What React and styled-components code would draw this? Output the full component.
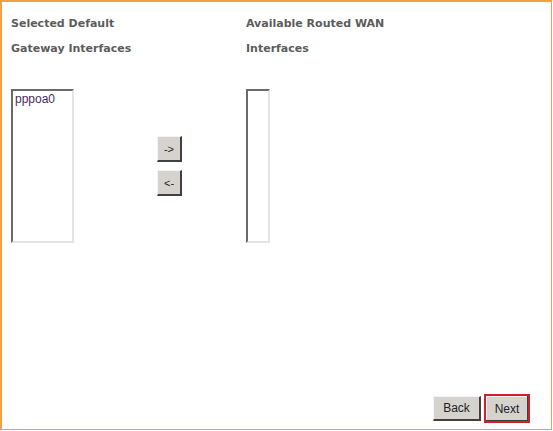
import React from "react";
import styled, { createGlobalStyle } from "styled-components";

const Global = createGlobalStyle`
  html, body { margin: 0; padding: 0; background: #ffffff; }
  #root { width: 553px; height: 431px; }
`;

const Frame = styled.div`
  box-sizing: border-box;
  width: 552px;
  height: 430px;
  border: 2px solid #f4a040;
  border-right-width: 1px;
  border-bottom-width: 1px;
  display: flex;
  flex-direction: column;
  padding: 9px 0 0 9px;
`;

const Grid = styled.div`
  display: grid;
  grid-template-columns: 146px 89px auto;
  grid-template-rows: auto auto;
  row-gap: 28px;
`;

const Heading = styled.div`
  font-family: "DejaVu Sans", Verdana, sans-serif;
  font-weight: bold;
  font-size: 11px;
  line-height: 25px;
  color: #5c5c5c;
  white-space: nowrap;
`;

const Cell = styled.div`
  display: flex;
  align-items: center;
`;

const ListBox = styled.div`
  box-sizing: border-box;
  width: ${(p) => p.$w}px;
  height: 154px;
  border-style: solid;
  border-width: 2px;
  border-color: #6a6a6a #e4e4e4 #e4e4e4 #6a6a6a;
  background: #ffffff;
  padding: 1px 2px;
`;

const Option = styled.div`
  font-family: "Liberation Sans", Arial, sans-serif;
  font-size: 12px;
  line-height: 14px;
  color: #4a2a5c;
`;

const MoveButtons = styled.div`
  display: flex;
  flex-direction: column;
  gap: 8px;
`;

const SmallButton = styled.button`
  box-sizing: border-box;
  width: 25px;
  height: 26px;
  padding: 0;
  background: #d6d3ce;
  border-style: solid;
  border-width: 1px 2px 2px 1px;
  border-color: #f4f4f4 #404040 #404040 #f4f4f4;
  font-family: "Liberation Sans", Arial, sans-serif;
  font-size: 11px;
  color: #222;
`;

const Footer = styled.div`
  margin-top: auto;
  display: flex;
  justify-content: flex-end;
  align-items: center;
  gap: 3px;
  padding: 0 21px 6px 0;
`;

const NavButton = styled.button`
  box-sizing: border-box;
  height: ${(p) => (p.$primary ? 29 : 25)}px;
  width: ${(p) => (p.$primary ? 46 : 48)}px;
  padding: 0;
  background: #d6d3ce;
  border-style: solid;
  border-width: ${(p) => (p.$primary ? "2px" : "1px 2px 2px 1px")};
  border-color: ${(p) =>
    p.$primary ? "#d0202c" : "#f4f4f4 #404040 #404040 #f4f4f4"};
  box-shadow: ${(p) =>
    p.$primary ? "inset -1px -1px 0 #404040, inset 1px 1px 0 #f4f4f4" : "none"};
  font-family: "Liberation Sans", Arial, sans-serif;
  font-size: 12px;
  color: #222;
`;

export default function App() {
  return (
    <>
      <Global />
      <Frame>
        <Grid>
          <Heading>
            Selected Default
            <br />
            Gateway Interfaces
          </Heading>
          <div />
          <Heading>
            Available Routed WAN
            <br />
            Interfaces
          </Heading>
          <Cell>
            <ListBox $w={63}>
              <Option>pppoa0</Option>
            </ListBox>
          </Cell>
          <Cell>
            <MoveButtons>
              <SmallButton>-&gt;</SmallButton>
              <SmallButton>&lt;-</SmallButton>
            </MoveButtons>
          </Cell>
          <Cell>
            <ListBox $w={24} />
          </Cell>
        </Grid>
        <Footer>
          <NavButton>Back</NavButton>
          <NavButton $primary>Next</NavButton>
        </Footer>
      </Frame>
    </>
  );
}
